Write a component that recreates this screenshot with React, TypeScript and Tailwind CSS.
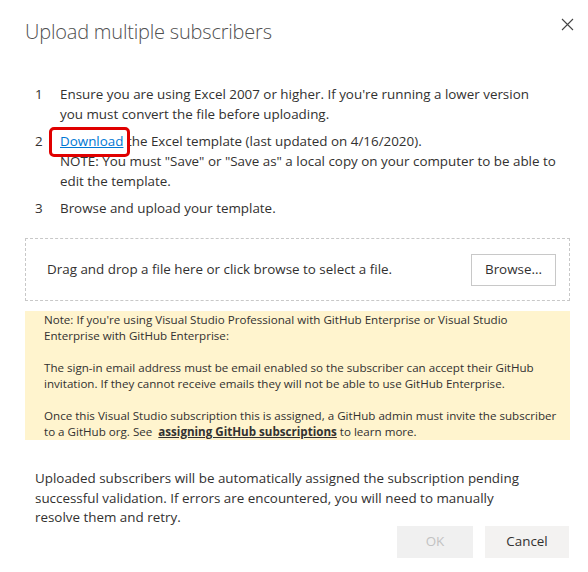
import React from "react";

export default function App() {
  const font = { fontFamily: '"Segoe UI", "Open Sans", "Liberation Sans", sans-serif' };
  return (
    <div className="w-[588px] h-[572px] bg-white text-[#323130] relative overflow-hidden" style={font}>
      <button className="absolute right-[14px] top-[17px] w-[14px] h-[14px] flex items-center justify-center">
        <svg width="13" height="13" viewBox="0 0 13 13">
          <path d="M1 1 L12 12 M12 1 L1 12" stroke="#444" strokeWidth="1.1" />
        </svg>
      </button>
      <div className="pl-[25px] pr-[18px] pt-[18px]">
        <h1 className="text-[20px] font-light text-[#505050] leading-[28px] tracking-[-0.2px]">Upload multiple subscribers</h1>
        <ol className="mt-[38px] pl-[10px] pr-[8px] text-[13.4px] leading-[20px] flex flex-col gap-[7px]">
          <li className="flex">
            <span className="w-[25px] shrink-0">1</span>
            <span>
              Ensure you are using Excel 2007 or higher. If you're running a lower version
              <br />
              you must convert the file before uploading.
            </span>
          </li>
          <li className="flex">
            <span className="w-[25px] shrink-0">2</span>
            <span>
              <span className="relative">
                <a className="text-[#0078d4] underline">Download</a>
                <span className="absolute left-[-11px] right-[-7px] top-[-5px] bottom-[-7px] border-[3px] border-[#e00000] rounded-[5px]" />
              </span>{" "}
              the Excel template (last updated on 4/16/2020).
              <br />
              NOTE: You must "Save" or "Save as" a local copy on your computer to be able to
              <br />
              edit the template.
            </span>
          </li>
          <li className="flex">
            <span className="w-[25px] shrink-0">3</span>
            <span>Browse and upload your template.</span>
          </li>
        </ol>
        <div className="mt-[20px] h-[63px] border border-dashed border-[#c8c8c8] flex items-center justify-between pl-[21px] pr-[13px]">
          <span className="text-[13.4px]">Drag and drop a file here or click browse to select a file.</span>
          <button className="w-[85px] h-[32px] border border-[#c8c8c8] bg-white text-[13.4px]">Browse...</button>
        </div>
        <div className="mt-[10px] bg-[#fff4ce] pl-[19px] pr-[4px] pt-[1px] pb-0 text-[11.6px] leading-[16px] text-[#323130] flex flex-col gap-[16px] whitespace-nowrap">
          <p>
            Note: If you're using Visual Studio Professional with GitHub Enterprise or Visual Studio
            <br />
            Enterprise with GitHub Enterprise:
          </p>
          <p>
            The sign-in email address must be email enabled so the subscriber can accept their GitHub
            <br />
            invitation. If they cannot receive emails they will not be able to use GitHub Enterprise.
          </p>
          <p>
            Once this Visual Studio subscription this is assigned, a GitHub admin must invite the subscriber
            <br />
            to a GitHub org. See{"\u00a0 "}
            <a className="font-bold underline">assigning GitHub subscriptions</a> to learn more.
          </p>
        </div>
        <p className="mt-[29px] pl-[10px] pr-[30px] text-[13.4px] leading-[19.5px]">
          Uploaded subscribers will be automatically assigned the subscription pending successful validation. If errors are encountered, you will need to manually resolve them and retry.
        </p>
        <div className="mt-[-2px] flex justify-end gap-[12px] pr-[1px]">
          <button className="w-[76px] h-[32px] bg-[#f0f0f0] text-[#c2c2c2] text-[13.4px]">OK</button>
          <button className="w-[84px] h-[32px] bg-[#f3f2f1] text-[#323130] text-[13.4px]">Cancel</button>
        </div>
      </div>
    </div>
  );
}
